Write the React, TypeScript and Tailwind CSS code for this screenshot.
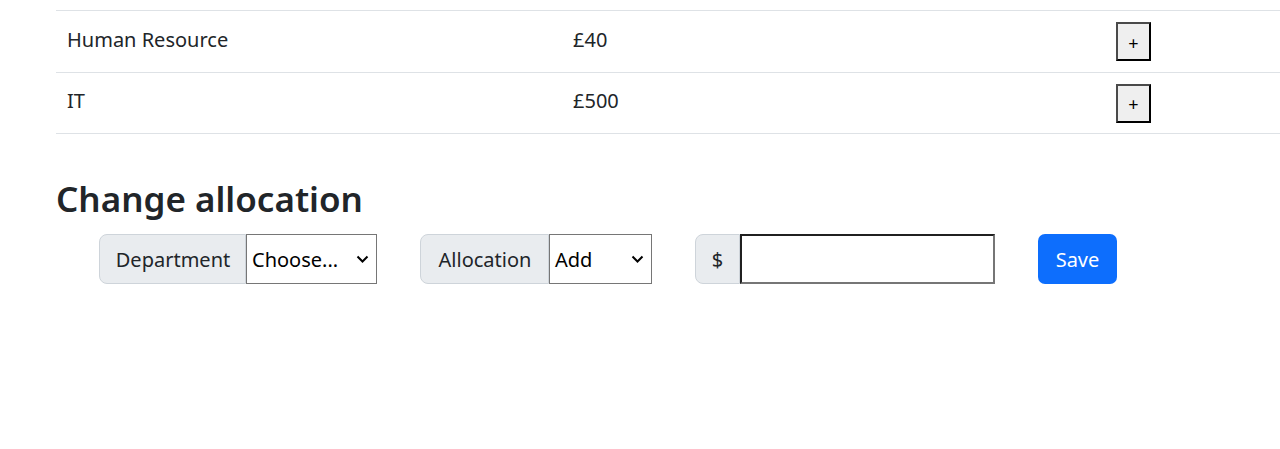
import React from "react";

const font = { fontFamily: '"Noto Sans", "Open Sans", sans-serif' };

function Chevron() {
  return (
    <svg width="13" height="9" viewBox="0 0 13 9" className="absolute right-[7px] top-1/2 -translate-y-1/2">
      <path d="M1.5 2 L6.5 7 L11.5 2" fill="none" stroke="#000" strokeWidth="2" />
    </svg>
  );
}

function PlusButton() {
  return (
    <button className="w-[35px] h-[39px] bg-[#efefef] border-2 border-t-[#4a4a4a] border-l-[#4a4a4a] border-r-black border-b-black text-[18px] text-black flex items-center justify-center leading-none pt-[2px]">
      +
    </button>
  );
}

export default function App() {
  const rows = [
    { name: "Human Resource", amount: "£40" },
    { name: "IT", amount: "£500" },
  ];
  return (
    <div className="w-[1280px] h-[449px] bg-white text-[#212529] overflow-hidden" style={font}>
      <div className="pt-[10px] pl-[56px]">
        {rows.map((r, i) => (
          <div
            key={r.name}
            className={`flex items-center h-[62px] border-t border-[#dee2e6] ${i === rows.length - 1 ? "border-b" : ""}`}
          >
            <div className="w-[509px] pl-[11px] text-[20px] leading-[30px] -mt-[4px]">{r.name}</div>
            <div className="w-[543px] pl-[8px] text-[20px] leading-[30px] -mt-[4px]">{r.amount}</div>
            <div className="pl-[8px]">
              <PlusButton />
            </div>
          </div>
        ))}
      </div>
      <h2 className="pl-[56px] mt-[44px] text-[35px] font-semibold leading-[42px]">Change allocation</h2>
      <div className="flex items-center pl-[99px] mt-[14px] text-[20px] leading-[30px]">
        <div className="flex h-[50px]">
          <div className="w-[147px] flex items-center justify-center pl-[1px] pt-[1px] bg-[#e9ecef] border border-[#ced4da] rounded-l-[8px]">Department</div>
          <div className="relative w-[131px] border border-[#767676] bg-white flex items-center pl-[5px] pt-[1px] text-black">
            Choose...
            <Chevron />
          </div>
        </div>
        <div className="flex h-[50px] ml-[43px]">
          <div className="w-[129px] flex items-center justify-center pl-[1px] pt-[1px] bg-[#e9ecef] border border-[#ced4da] rounded-l-[8px]">Allocation</div>
          <div className="relative w-[103px] border border-[#767676] bg-white flex items-center pl-[5px] pt-[1px] text-black">
            Add
            <Chevron />
          </div>
        </div>
        <div className="flex h-[50px] ml-[43px]">
          <div className="w-[45px] flex items-center justify-center pt-[1px] bg-[#e9ecef] border border-[#ced4da] rounded-l-[8px]">$</div>
          <div className="w-[255px] bg-white border-2 border-t-[#202020] border-l-[#202020] border-r-[#767676] border-b-[#767676]"></div>
        </div>
        <button className="ml-[43px] h-[50px] w-[79px] bg-[#0d6efd] text-white rounded-[7px] flex items-center justify-center pt-[1px]">
          Save
        </button>
      </div>
    </div>
  );
}
